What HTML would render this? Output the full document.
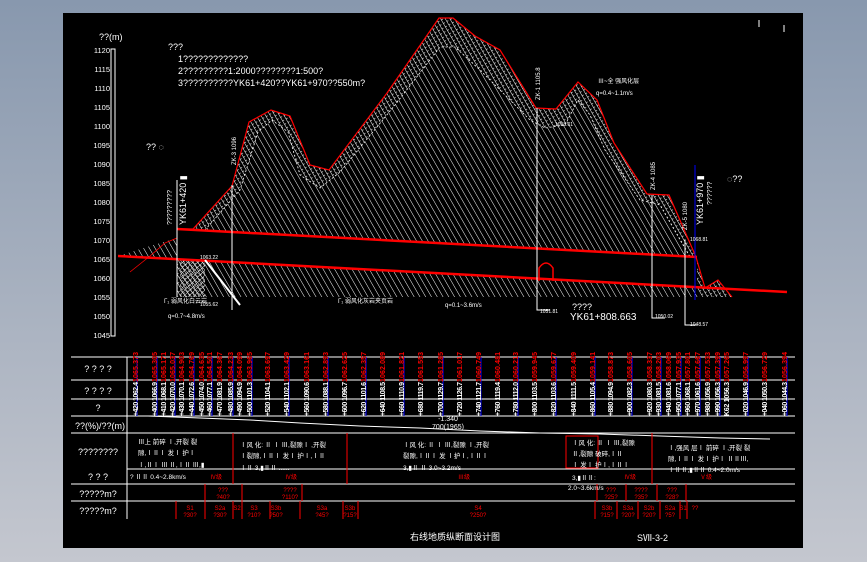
<!DOCTYPE html>
<html><head><meta charset="utf-8">
<style>
html,body{margin:0;padding:0;}
body{width:867px;height:562px;overflow:hidden;background:linear-gradient(#8898ae,#c4c7cf);font-family:"Liberation Sans","Noto Sans CJK SC",sans-serif;}
svg{position:absolute;left:0;top:0;}
text{font-family:"Liberation Sans","Noto Sans CJK SC",sans-serif;}
</style></head><body>
<svg width="867" height="562" viewBox="0 0 867 562" xmlns="http://www.w3.org/2000/svg">
<defs>
<pattern id="h" width="5" height="5" patternUnits="userSpaceOnUse" patternTransform="rotate(-30)">
<line x1="0" y1="0" x2="0" y2="5" stroke="#fff" stroke-width="1"/>
</pattern>
<pattern id="w" width="4" height="4" patternUnits="userSpaceOnUse" patternTransform="rotate(-30)">
<line x1="0" y1="0" x2="0" y2="4" stroke="#fff" stroke-width="1"/>
<line x1="0" y1="2" x2="2" y2="2" stroke="#fff" stroke-width="0.6"/>
</pattern>
<pattern id="x" width="5" height="5" patternUnits="userSpaceOnUse">
<path d="M0 0L5 5M5 0L0 5" stroke="#ddd" stroke-width="0.6"/>
</pattern>
</defs>
<rect x="63" y="13" width="740" height="535" fill="#000"/>
<!-- hatched rock: weathered outer band -->
<polygon fill="url(#w)" points="177,229 193,229 232,186 249,122 271,110 290,116 310,165 329,170 387,93 439,18 453,18 475,36 500,50 536,108 556,109 578,82 597,100 614,143 647,194 669,195 696,257 705,288 718,280 732,297 177,297"/>
<polygon fill="#000" points="205,297 205,230 240,190 258,132 272,120 288,132 300,175 320,188 340,172 395,105 440,47 455,47 480,70 510,100 530,120 545,128 565,125 578,100 590,115 605,150 640,200 660,205 690,257 700,297"/>
<polygon fill="url(#h)" points="205,297 205,230 240,190 258,132 272,120 288,132 300,175 320,188 340,172 395,105 440,47 455,47 480,70 510,100 530,120 545,128 565,125 578,100 590,115 605,150 640,200 660,205 690,257 700,297"/>
<polygon fill="url(#x)" opacity="0.9" points="180,259 205,260 205,297 180,297"/>
<polygon fill="url(#h)" points="118,256 150,246 177,238 177,259"/>
<polyline fill="none" stroke="#fff" stroke-width="0.8" stroke-dasharray="2 2" points="205,230 240,190 258,132 272,120 288,132 300,175 320,188 340,172 395,105 440,47 455,47 480,70 510,100 530,120 545,128 565,125 578,100 590,115 605,150 640,200 660,205 690,257"/>
<!-- tunnel -->
<polygon fill="#000" points="177,229 697,257 697,288 177,259"/>
<polyline fill="none" stroke="#f00" stroke-width="1.2" points="177,229 193,229 232,186 249,122 271,110 290,116 310,165 329,170 387,93 439,18 453,18 475,36 500,50 536,108 556,109 578,82 597,100 614,143 647,194 669,195 696,257 705,288 718,280 732,297"/>
<line x1="177" y1="229" x2="697" y2="257" stroke="#f00" stroke-width="2.5"/>
<line x1="118" y1="256" x2="787" y2="292" stroke="#f00" stroke-width="2.5"/>
<polyline fill="none" stroke="#f00" stroke-width="0.8" points="130,272 150,256 165,243 177,238"/>
<path d="M539 281 V268 Q546 258 553 268 V281" fill="none" stroke="#f00" stroke-width="1.5"/>
<g stroke="#fff" stroke-width="1" fill="none">
<path d="M177 180 V297"/><path d="M232 185 V310"/><path d="M205 260 L240 305" stroke-width="2"/>
<path d="M537 108 V310 H550"/><path d="M652 195 V318 H665"/><path d="M685 240 V325 H697"/>
</g>
<line x1="695" y1="165" x2="695" y2="300" stroke="#00f" stroke-width="1"/>
<rect x="111" y="49" width="4" height="287" fill="none" stroke="#fff" stroke-width="1"/>
<g fill="#fff" font-size="7.5" text-anchor="end">
<text x="110" y="53">1120</text><text x="110" y="72">1115</text><text x="110" y="91">1110</text><text x="110" y="110">1105</text><text x="110" y="129">1100</text><text x="110" y="148">1095</text><text x="110" y="167">1090</text><text x="110" y="186">1085</text><text x="110" y="205">1080</text><text x="110" y="224">1075</text><text x="110" y="243">1070</text><text x="110" y="262">1065</text><text x="110" y="281">1060</text><text x="110" y="300">1055</text><text x="110" y="319">1050</text><text x="110" y="338">1045</text>
</g>
<g fill="#fff" font-size="9">
<text x="99" y="40">??(m)</text>
<text x="168" y="50">???</text>
<text x="178" y="62">1?????????????</text>
<text x="178" y="74">2?????????1:2000????????1:500?</text>
<text x="178" y="86">3??????????YK61+420??YK61+970??550m?</text>
<text x="146" y="150">?? ◌</text>
<text x="727" y="182">◌??</text>
<text x="572" y="310">????</text>
<text x="570" y="320" font-size="10">YK61+808.663</text>
</g>
<g fill="#fff" font-size="6">
<text x="598" y="83">Ⅲ~全 强风化层</text>
<text x="596" y="95">q=0.4~1.1m/s</text>
<text x="164" y="303">Γ₁ 弱风化白云岩</text>
<text x="168" y="318">q=0.7~4.8m/s</text>
<text x="338" y="303">Γ₁ 弱风化灰岩夹页岩</text>
<text x="445" y="307">q=0.1~3.6m/s</text>
<text x="200" y="259" font-size="5">1063.22</text>
<text x="200" y="306" font-size="5">1055.62</text>
<text x="540" y="313" font-size="5">1051.81</text>
<text x="655" y="318" font-size="5">1050.02</text>
<text x="690" y="326" font-size="5">1048.57</text>
<text x="555" y="126" font-size="5">1098.01</text>
<text x="690" y="241" font-size="5">1068.81</text>
</g>
<g fill="#fff" font-size="9">
<text transform="translate(186,225) rotate(-90)">YK61+420 ▮</text>
<text transform="translate(172,225) rotate(-90)" font-size="7">?????????</text>
<text transform="translate(703,225) rotate(-90)">YK61+970 ▮</text>
<text transform="translate(712,205) rotate(-90)" font-size="7">??????</text>
<text transform="translate(540,100) rotate(-90)" font-size="6">ZK-1 1105.8</text>
<text transform="translate(236,165) rotate(-90)" font-size="6">ZK-3 1096</text>
<text transform="translate(655,190) rotate(-90)" font-size="6">ZK-4 1085</text>
<text transform="translate(687,230) rotate(-90)" font-size="6">ZK-5 1080</text>
</g>
<g stroke="#fff" stroke-width="1">
<line x1="71" y1="357" x2="795" y2="357"/><line x1="71" y1="380" x2="795" y2="380"/><line x1="71" y1="399" x2="795" y2="399"/>
<line x1="71" y1="416" x2="795" y2="416"/><line x1="71" y1="433" x2="795" y2="433"/><line x1="127" y1="469" x2="795" y2="469"/>
<line x1="71" y1="484" x2="795" y2="484"/><line x1="71" y1="501" x2="795" y2="501"/>
<line x1="127" y1="357" x2="127" y2="519"/>
<polyline fill="none" points="148,416 200,418 250,420 300,423 360,426 420,428 480,431 540,433 600,434 660,436 720,438 770,439"/>
</g>
<g fill="#fff" font-size="9" text-anchor="middle">
<text x="98" y="372">? ? ? ?</text><text x="98" y="394">? ? ? ?</text><text x="98" y="411">?</text>
<text x="100" y="429">??(%)/??(m)</text><text x="98" y="455">????????</text><text x="98" y="480">?  ?  ?</text>
<text x="98" y="497">?????m?</text><text x="98" y="514">?????m?</text>
<text x="448" y="421" font-size="7">-1.340</text><text x="448" y="429" font-size="7">700(1965)</text>
</g>
<g stroke="#f00" stroke-width="1">
<line x1="233" y1="433" x2="233" y2="484"/><line x1="347" y1="433" x2="347" y2="484"/><line x1="652" y1="433" x2="652" y2="484"/>
<rect x="566" y="436" width="32" height="32" fill="none"/>
<line x1="205" y1="484" x2="205" y2="501"/><line x1="242" y1="484" x2="242" y2="501"/><line x1="302" y1="484" x2="302" y2="501"/>
<line x1="597" y1="484" x2="597" y2="501"/><line x1="626" y1="484" x2="626" y2="501"/><line x1="657" y1="484" x2="657" y2="501"/><line x1="686" y1="484" x2="686" y2="501"/>
<line x1="176" y1="501" x2="176" y2="519"/><line x1="205" y1="501" x2="205" y2="519"/><line x1="233" y1="501" x2="233" y2="519"/><line x1="242" y1="501" x2="242" y2="519"/><line x1="270" y1="501" x2="270" y2="519"/><line x1="300" y1="501" x2="300" y2="519"/><line x1="343" y1="501" x2="343" y2="519"/><line x1="358" y1="501" x2="358" y2="519"/>
<line x1="595" y1="501" x2="595" y2="519"/><line x1="617" y1="501" x2="617" y2="519"/><line x1="638" y1="501" x2="638" y2="519"/><line x1="660" y1="501" x2="660" y2="519"/><line x1="680" y1="501" x2="680" y2="519"/><line x1="687" y1="501" x2="687" y2="519"/>
</g>
<g fill="#fff" font-size="6.5">
<text x="138" y="444">Ⅲ上 前碎 Ⅰ,开裂 裂</text><text x="138" y="455">隙,ⅠⅡⅠ 发Ⅰ 护Ⅰ</text><text x="138" y="467">Ⅰ,ⅡⅠ Ⅲ Ⅱ,ⅠⅡ Ⅲ,▮</text>
<text x="240" y="447">Ⅰ风 化: Ⅱ Ⅰ Ⅲ,裂隙Ⅰ ,开裂</text><text x="240" y="458">Ⅰ裂隙,ⅠⅡⅠ 发Ⅰ 护Ⅰ,ⅠⅡ</text><text x="240" y="470">ⅠⅡ 3,▮ⅡⅡ ......</text>
<text x="403" y="447">Ⅰ风 化: Ⅱ Ⅰ Ⅲ,裂隙 Ⅰ,开裂</text><text x="403" y="458">裂隙,ⅠⅡⅠ 发 Ⅰ护Ⅰ,ⅠⅡⅠ</text><text x="403" y="470">3,▮Ⅱ Ⅱ 3.0~3.2m/s</text>
<text x="572" y="445">Ⅰ风 化: Ⅱ Ⅰ Ⅲ,裂隙</text><text x="572" y="456">Ⅱ,裂隙 破碎,ⅠⅡ</text><text x="572" y="467">Ⅰ 发Ⅰ 护Ⅰ,ⅠⅡⅠ</text>
<text x="668" y="450">Ⅰ,强风 层Ⅰ 前碎 Ⅰ,开裂 裂</text><text x="668" y="461">隙,ⅠⅡⅠ 发Ⅰ 护Ⅰ ⅡⅡⅢ,</text><text x="668" y="472">ⅠⅡⅡ,▮ⅡⅡ 0.4~2.0m/s</text>
<text x="130" y="479">? ⅡⅡ 0.4~2.8km/s</text>
<text x="572" y="480">3,▮ⅡⅡ:</text><text x="568" y="490">2.0~3.6km/s</text>
</g>
<g fill="#f00" font-size="6" text-anchor="middle">
<text x="216" y="479">Ⅳ级</text><text x="291" y="479">Ⅳ级</text><text x="464" y="479">Ⅲ级</text><text x="630" y="479">Ⅳ级</text><text x="706" y="479">Ⅴ级</text>
<text x="223" y="492">???</text><text x="223" y="499">?40?</text><text x="290" y="492">????</text><text x="290" y="499">?110?</text>
<text x="611" y="492">???</text><text x="611" y="499">?25?</text><text x="641" y="492">????</text><text x="641" y="499">?35?</text><text x="672" y="492">???</text><text x="672" y="499">?28?</text>
<text x="190" y="510">S1</text><text x="190" y="517">?30?</text><text x="220" y="510">S2a</text><text x="220" y="517">?30?</text><text x="237" y="510">S2</text><text x="254" y="510">S3</text><text x="254" y="517">?10?</text>
<text x="276" y="510">S3b</text><text x="276" y="517">?50?</text><text x="322" y="510">S3a</text><text x="322" y="517">?45?</text><text x="350" y="510">S3b</text><text x="350" y="517">?15?</text>
<text x="478" y="510">S4</text><text x="478" y="517">?250?</text>
<text x="607" y="510">S3b</text><text x="607" y="517">?15?</text><text x="628" y="510">S3a</text><text x="628" y="517">?20?</text><text x="649" y="510">S2b</text><text x="649" y="517">?20?</text><text x="670" y="510">S2a</text><text x="670" y="517">?5?</text><text x="683" y="510">S1</text><text x="695" y="510">??</text>
</g>
<g font-size="7" font-weight="bold">
<g>
<line x1="137" y1="357" x2="137" y2="416" stroke="#00f"/><line x1="157" y1="357" x2="157" y2="416" stroke="#00f"/><line x1="175" y1="357" x2="175" y2="416" stroke="#00f"/><line x1="194" y1="357" x2="194" y2="416" stroke="#00f"/><line x1="212" y1="357" x2="212" y2="416" stroke="#00f"/><line x1="233" y1="357" x2="233" y2="416" stroke="#00f"/><line x1="252" y1="357" x2="252" y2="416" stroke="#00f"/><line x1="289" y1="357" x2="289" y2="416" stroke="#00f"/><line x1="328" y1="357" x2="328" y2="416" stroke="#00f"/><line x1="366" y1="357" x2="366" y2="416" stroke="#00f"/><line x1="404" y1="357" x2="404" y2="416" stroke="#00f"/><line x1="443" y1="357" x2="443" y2="416" stroke="#00f"/><line x1="481" y1="357" x2="481" y2="416" stroke="#00f"/><line x1="518" y1="357" x2="518" y2="416" stroke="#00f"/><line x1="556" y1="357" x2="556" y2="416" stroke="#00f"/><line x1="595" y1="357" x2="595" y2="416" stroke="#00f"/><line x1="632" y1="357" x2="632" y2="416" stroke="#00f"/><line x1="661" y1="357" x2="661" y2="416" stroke="#00f"/><line x1="681" y1="357" x2="681" y2="416" stroke="#00f"/><line x1="700" y1="357" x2="700" y2="416" stroke="#00f"/><line x1="720" y1="357" x2="720" y2="416" stroke="#00f"/><line x1="748" y1="357" x2="748" y2="416" stroke="#00f"/><line x1="787" y1="357" x2="787" y2="416" stroke="#00f"/>
</g>
<g fill="#f00">
<text transform="translate(138,382) rotate(-90)" textLength="30">1065.373</text><text transform="translate(157,382) rotate(-90)" textLength="30">1065.305</text><text transform="translate(166,382) rotate(-90)" textLength="30">1065.171</text><text transform="translate(175,382) rotate(-90)" textLength="30">1065.037</text><text transform="translate(184,382) rotate(-90)" textLength="30">1064.903</text><text transform="translate(194,382) rotate(-90)" textLength="30">1064.769</text><text transform="translate(204,382) rotate(-90)" textLength="30">1064.635</text><text transform="translate(212,382) rotate(-90)" textLength="30">1064.501</text><text transform="translate(222,382) rotate(-90)" textLength="30">1064.367</text><text transform="translate(233,382) rotate(-90)" textLength="30">1064.233</text><text transform="translate(242,382) rotate(-90)" textLength="30">1064.099</text><text transform="translate(252,382) rotate(-90)" textLength="30">1063.965</text><text transform="translate(270,382) rotate(-90)" textLength="30">1063.697</text><text transform="translate(289,382) rotate(-90)" textLength="30">1063.429</text><text transform="translate(309,382) rotate(-90)" textLength="30">1063.161</text><text transform="translate(328,382) rotate(-90)" textLength="30">1062.893</text><text transform="translate(347,382) rotate(-90)" textLength="30">1062.625</text><text transform="translate(366,382) rotate(-90)" textLength="30">1062.357</text><text transform="translate(385,382) rotate(-90)" textLength="30">1062.089</text><text transform="translate(404,382) rotate(-90)" textLength="30">1061.821</text><text transform="translate(423,382) rotate(-90)" textLength="30">1061.553</text><text transform="translate(443,382) rotate(-90)" textLength="30">1061.285</text><text transform="translate(462,382) rotate(-90)" textLength="30">1061.017</text><text transform="translate(481,382) rotate(-90)" textLength="30">1060.749</text><text transform="translate(500,382) rotate(-90)" textLength="30">1060.481</text><text transform="translate(518,382) rotate(-90)" textLength="30">1060.213</text><text transform="translate(537,382) rotate(-90)" textLength="30">1059.945</text><text transform="translate(556,382) rotate(-90)" textLength="30">1059.677</text><text transform="translate(576,382) rotate(-90)" textLength="30">1059.409</text><text transform="translate(595,382) rotate(-90)" textLength="30">1059.141</text><text transform="translate(613,382) rotate(-90)" textLength="30">1058.873</text><text transform="translate(632,382) rotate(-90)" textLength="30">1058.605</text><text transform="translate(652,382) rotate(-90)" textLength="30">1058.337</text><text transform="translate(661,382) rotate(-90)" textLength="30">1058.203</text><text transform="translate(671,382) rotate(-90)" textLength="30">1058.069</text><text transform="translate(681,382) rotate(-90)" textLength="30">1057.935</text><text transform="translate(690,382) rotate(-90)" textLength="30">1057.801</text><text transform="translate(700,382) rotate(-90)" textLength="30">1057.667</text><text transform="translate(710,382) rotate(-90)" textLength="30">1057.533</text><text transform="translate(720,382) rotate(-90)" textLength="30">1057.399</text><text transform="translate(729,382) rotate(-90)" textLength="30">1057.265</text><text transform="translate(748,382) rotate(-90)" textLength="30">1056.997</text><text transform="translate(767,382) rotate(-90)" textLength="30">1056.729</text><text transform="translate(787,382) rotate(-90)" textLength="30">1056.394</text>
</g>
<g fill="#fff">
<text transform="translate(138,416) rotate(-90)" textLength="34">+420 1062.4</text><text transform="translate(157,416) rotate(-90)" textLength="34">+400 1066.9</text><text transform="translate(166,416) rotate(-90)" textLength="34">+410 1068.1</text><text transform="translate(175,416) rotate(-90)" textLength="34">+420 1070.0</text><text transform="translate(184,416) rotate(-90)" textLength="34">+430 1070.1</text><text transform="translate(194,416) rotate(-90)" textLength="34">+440 1072.6</text><text transform="translate(204,416) rotate(-90)" textLength="34">+450 1074.0</text><text transform="translate(212,416) rotate(-90)" textLength="34">+460 1077.1</text><text transform="translate(222,416) rotate(-90)" textLength="34">+470 1081.9</text><text transform="translate(233,416) rotate(-90)" textLength="34">+480 1085.9</text><text transform="translate(242,416) rotate(-90)" textLength="34">+490 1094.9</text><text transform="translate(252,416) rotate(-90)" textLength="34">+500 1101.3</text><text transform="translate(270,416) rotate(-90)" textLength="34">+520 1104.1</text><text transform="translate(289,416) rotate(-90)" textLength="34">+540 1102.1</text><text transform="translate(309,416) rotate(-90)" textLength="34">+560 1090.6</text><text transform="translate(328,416) rotate(-90)" textLength="34">+580 1088.1</text><text transform="translate(347,416) rotate(-90)" textLength="34">+600 1096.7</text><text transform="translate(366,416) rotate(-90)" textLength="34">+620 1101.6</text><text transform="translate(385,416) rotate(-90)" textLength="34">+640 1108.5</text><text transform="translate(404,416) rotate(-90)" textLength="34">+660 1110.9</text><text transform="translate(423,416) rotate(-90)" textLength="34">+680 1119.7</text><text transform="translate(443,416) rotate(-90)" textLength="34">+700 1129.7</text><text transform="translate(462,416) rotate(-90)" textLength="34">+720 1126.7</text><text transform="translate(481,416) rotate(-90)" textLength="34">+740 1121.7</text><text transform="translate(500,416) rotate(-90)" textLength="34">+760 1119.4</text><text transform="translate(518,416) rotate(-90)" textLength="34">+780 1112.0</text><text transform="translate(537,416) rotate(-90)" textLength="34">+800 1103.5</text><text transform="translate(556,416) rotate(-90)" textLength="34">+820 1103.6</text><text transform="translate(576,416) rotate(-90)" textLength="34">+840 1111.5</text><text transform="translate(595,416) rotate(-90)" textLength="34">+860 1105.4</text><text transform="translate(613,416) rotate(-90)" textLength="34">+880 1094.9</text><text transform="translate(632,416) rotate(-90)" textLength="34">+900 1082.3</text><text transform="translate(652,416) rotate(-90)" textLength="34">+920 1080.3</text><text transform="translate(661,416) rotate(-90)" textLength="34">+930 1081.5</text><text transform="translate(671,416) rotate(-90)" textLength="34">+940 1081.6</text><text transform="translate(681,416) rotate(-90)" textLength="34">+950 1077.1</text><text transform="translate(690,416) rotate(-90)" textLength="34">+960 1068.1</text><text transform="translate(700,416) rotate(-90)" textLength="34">+970 1061.6</text><text transform="translate(710,416) rotate(-90)" textLength="34">+980 1056.9</text><text transform="translate(720,416) rotate(-90)" textLength="34">+990 1056.3</text><text transform="translate(729,416) rotate(-90)" textLength="34">K62 1056.3</text><text transform="translate(748,416) rotate(-90)" textLength="34">+020 1046.9</text><text transform="translate(767,416) rotate(-90)" textLength="34">+040 1050.3</text><text transform="translate(787,416) rotate(-90)" textLength="34">+060 1044.3</text>
</g>
</g>
<g fill="#fff">
<text x="410" y="540" font-size="9">右线地质纵断面设计图</text>
<text x="637" y="541" font-size="9">SⅦ-3-2</text>
</g>
<line x1="759" y1="20" x2="759" y2="27" stroke="#fff"/><line x1="784" y1="25" x2="784" y2="32" stroke="#fff"/>
</svg>
</body></html>
